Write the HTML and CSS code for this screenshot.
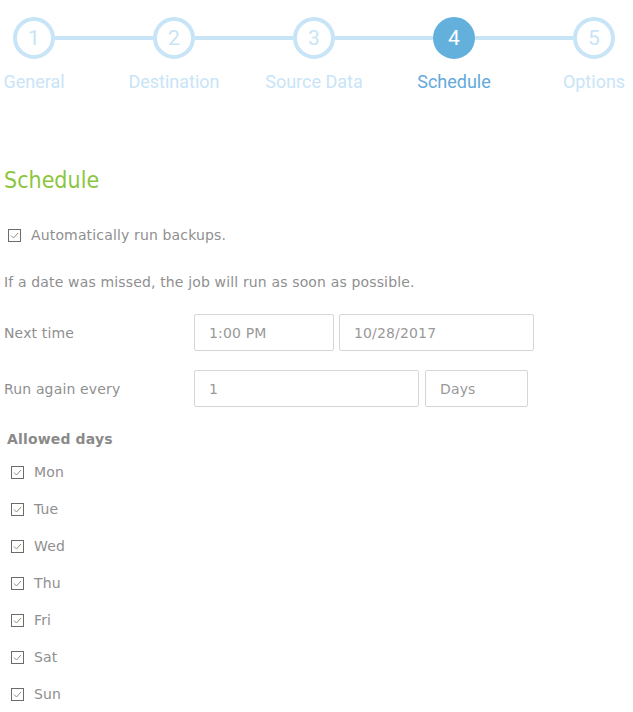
FILE: index.html
```html
<!DOCTYPE html>
<html>
<head>
<meta charset="utf-8">
<link rel="stylesheet" href="styles.css">
</head>
<body>
<div class="stepper">
  <div class="step"><div class="circle">1</div><div class="label">General</div></div>
  <div class="bar"></div>
  <div class="step"><div class="circle">2</div><div class="label">Destination</div></div>
  <div class="bar"></div>
  <div class="step"><div class="circle">3</div><div class="label">Source Data</div></div>
  <div class="bar"></div>
  <div class="step active"><div class="circle">4</div><div class="label">Schedule</div></div>
  <div class="bar"></div>
  <div class="step"><div class="circle">5</div><div class="label">Options</div></div>
</div>

<div class="content">
  <h2 class="title">Schedule</h2>

  <label class="check auto">
    <svg class="box" width="13" height="13" viewBox="0 0 13 13"><rect x="0.5" y="0.5" width="12" height="12" fill="#fff" stroke="#6b6b6b"/><path d="M3 6.5 L5.5 9 L10 4" fill="none" stroke="#9a8a7a" stroke-width="1"/></svg>
    <span>Automatically run backups.</span>
  </label>

  <p class="note">If a date was missed, the job will run as soon as possible.</p>

  <div class="row row-next">
    <div class="rlabel">Next time</div>
    <div class="input w-time">1:00 PM</div>
    <div class="input w-date">10/28/2017</div>
  </div>
  <div class="row row-again">
    <div class="rlabel">Run again every</div>
    <div class="input w-num">1</div>
    <div class="input w-unit">Days</div>
  </div>

  <div class="days-title">Allowed days</div>
  <div class="days">
    <label class="check day"><svg class="box" width="13" height="13" viewBox="0 0 13 13"><rect x="0.5" y="0.5" width="12" height="12" fill="#fff" stroke="#6b6b6b"/><path d="M3 6.5 L5.5 9 L10 4" fill="none" stroke="#9a8a7a" stroke-width="1"/></svg><span>Mon</span></label>
    <label class="check day"><svg class="box" width="13" height="13" viewBox="0 0 13 13"><rect x="0.5" y="0.5" width="12" height="12" fill="#fff" stroke="#6b6b6b"/><path d="M3 6.5 L5.5 9 L10 4" fill="none" stroke="#9a8a7a" stroke-width="1"/></svg><span>Tue</span></label>
    <label class="check day"><svg class="box" width="13" height="13" viewBox="0 0 13 13"><rect x="0.5" y="0.5" width="12" height="12" fill="#fff" stroke="#6b6b6b"/><path d="M3 6.5 L5.5 9 L10 4" fill="none" stroke="#9a8a7a" stroke-width="1"/></svg><span>Wed</span></label>
    <label class="check day"><svg class="box" width="13" height="13" viewBox="0 0 13 13"><rect x="0.5" y="0.5" width="12" height="12" fill="#fff" stroke="#6b6b6b"/><path d="M3 6.5 L5.5 9 L10 4" fill="none" stroke="#9a8a7a" stroke-width="1"/></svg><span>Thu</span></label>
    <label class="check day"><svg class="box" width="13" height="13" viewBox="0 0 13 13"><rect x="0.5" y="0.5" width="12" height="12" fill="#fff" stroke="#6b6b6b"/><path d="M3 6.5 L5.5 9 L10 4" fill="none" stroke="#9a8a7a" stroke-width="1"/></svg><span>Fri</span></label>
    <label class="check day"><svg class="box" width="13" height="13" viewBox="0 0 13 13"><rect x="0.5" y="0.5" width="12" height="12" fill="#fff" stroke="#6b6b6b"/><path d="M3 6.5 L5.5 9 L10 4" fill="none" stroke="#9a8a7a" stroke-width="1"/></svg><span>Sat</span></label>
    <label class="check day"><svg class="box" width="13" height="13" viewBox="0 0 13 13"><rect x="0.5" y="0.5" width="12" height="12" fill="#fff" stroke="#6b6b6b"/><path d="M3 6.5 L5.5 9 L10 4" fill="none" stroke="#9a8a7a" stroke-width="1"/></svg><span>Sun</span></label>
  </div>
</div>
</body>
</html>
```
FILE: styles.css
```css
html, body {
  margin: 0;
  padding: 0;
  background: #fff;
}
body {
  font-family: "DejaVu Sans", sans-serif;
  color: #8f8f8f;
  font-size: 14px;
  letter-spacing: 0.15px;
  overflow: hidden;
}
.stepper {
  display: flex;
  align-items: flex-start;
  padding: 17px 0 0 13px;
  font-family: Roboto, "Liberation Sans", sans-serif;
  font-stretch: normal;
  letter-spacing: 0;
}
.step {
  width: 42px;
  display: flex;
  flex-direction: column;
  align-items: center;
}
.circle {
  box-sizing: border-box;
  width: 42px;
  height: 42px;
  border-radius: 50%;
  border: 4px solid #c8e4f7;
  color: #c8e4f7;
  font-size: 21px;
  display: flex;
  align-items: center;
  justify-content: center;
  background: #fff;
}
.label {
  margin-top: 13px;
  font-size: 18px;
  line-height: 20px;
  color: #c8e4f7;
  white-space: nowrap;
}
.active .circle {
  background: #64b0dd;
  border-color: #64b0dd;
  color: #fff;
}
.active .label {
  color: #64a9db;
}
.bar {
  width: 98px;
  height: 4px;
  margin-top: 19px;
  background: #c8e4f7;
}
.content {
  padding: 0 0 0 4px;
}
.title {
  margin: 73px 0 0 0;
  font-family: "DejaVu Sans", sans-serif;
  font-stretch: condensed;
  font-weight: normal;
  font-size: 23px;
  line-height: 30px;
  letter-spacing: 0;
  color: #8cc63f;
}
.check {
  display: flex;
  align-items: center;
}
.box {
  flex: none;
}
.auto {
  margin: 30px 0 0 4px;
  gap: 10px;
  line-height: 20px;
}
.note {
  margin: 27px 0 0 0;
  line-height: 20px;
}
.row {
  display: flex;
  align-items: center;
}
.row-next {
  margin-top: 22px;
}
.row-again {
  margin-top: 19px;
}
.rlabel {
  width: 190px;
}
.input {
  box-sizing: border-box;
  height: 37px;
  border: 1px solid #d6d6d6;
  border-radius: 2px;
  padding: 0 14px;
  display: flex;
  align-items: center;
  color: #999;
}
.w-time { width: 140px; }
.w-date { width: 195px; margin-left: 5px; }
.w-num { width: 225px; }
.w-unit { width: 103px; margin-left: 6px; }
.days-title {
  margin: 22px 0 0 3px;
  font-weight: bold;
  line-height: 20px;
  color: #8a8a8a;
}
.days {
  display: flex;
  flex-direction: column;
  gap: 17px;
  margin: 13px 0 0 7px;
}
.day {
  gap: 10px;
  line-height: 20px;
}
```
